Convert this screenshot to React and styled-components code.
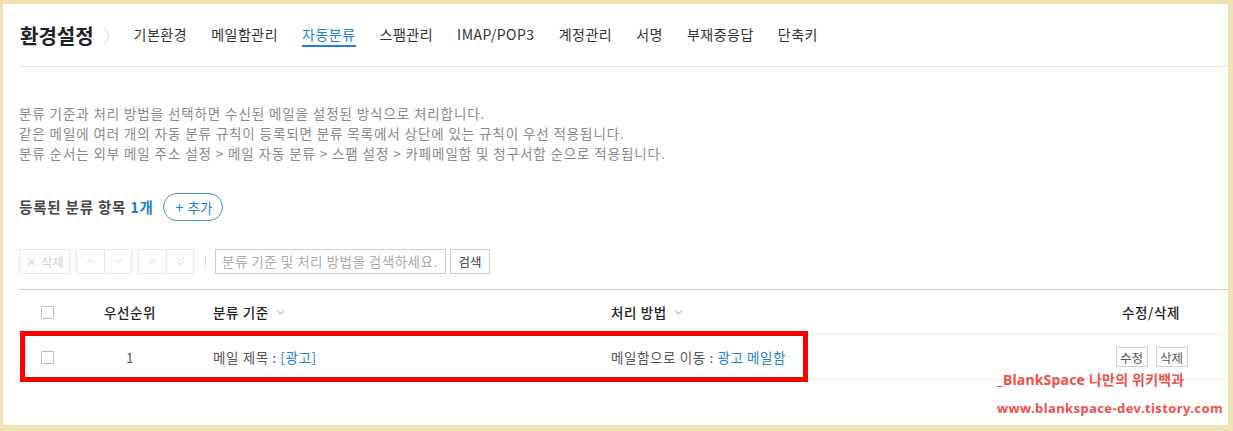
import React from "react";
import styled, { createGlobalStyle } from "styled-components";

const GlobalStyle = createGlobalStyle`
  html, body {
    margin: 0;
    padding: 0;
    background: #efe2b3;
  }
  body {
    font-family: "Noto Sans CJK KR", "Noto Sans", sans-serif;
    color: #333;
  }
  * { box-sizing: border-box; }
`;

const tabs = ["기본환경", "메일함관리", "자동분류", "스팸관리", "IMAP/POP3", "계정관리", "서명", "부재중응답", "단축키"];

const Chevron = ({ size = 7, color = "#999" }) => (
  <svg width={size + 2} height={size} viewBox="0 0 9 7" fill="none">
    <path d="M1 1.5 L4.5 5 L8 1.5" stroke={color} strokeWidth="1" />
  </svg>
);

const App = () => {
  return (
    <Frame>
      <GlobalStyle />
      <Page>
        <Header>
          <Title>환경설정</Title>
          <TitleArrow width="8" height="18" viewBox="0 0 8 18">
            <path d="M1 1 L6.5 9 L1 17" stroke="#d8d8d8" strokeWidth="1" fill="none" />
          </TitleArrow>
          <TabList>
            {tabs.map((t) => (
              <Tab key={t} $active={t === "자동분류"}>{t}</Tab>
            ))}
          </TabList>
        </Header>

        <Description>
          <p>분류 기준과 처리 방법을 선택하면 수신된 메일을 설정된 방식으로 처리합니다.</p>
          <p>같은 메일에 여러 개의 자동 분류 규칙이 등록되면 분류 목록에서 상단에 있는 규칙이 우선 적용됩니다.</p>
          <p>분류 순서는 외부 메일 주소 설정 &gt; 메일 자동 분류 &gt; 스팸 설정 &gt; 카페메일함 및 청구서함 순으로 적용됩니다.</p>
        </Description>

        <CountRow>
          <CountText>
            등록된 분류 항목 <Blue>1개</Blue>
          </CountText>
          <AddButton>
            <span>+</span>추가
          </AddButton>
        </CountRow>

        <Toolbar>
          <ToolButton disabled $w={51}>× 삭제</ToolButton>
          <ButtonGroup>
            <GroupButton disabled>
              <svg width="9" height="6" viewBox="0 0 9 6"><path d="M1 5 L4.5 1.5 L8 5" stroke="#ddd" fill="none" /></svg>
            </GroupButton>
            <GroupButton disabled>
              <svg width="9" height="6" viewBox="0 0 9 6"><path d="M1 1 L4.5 4.5 L8 1" stroke="#ddd" fill="none" /></svg>
            </GroupButton>
          </ButtonGroup>
          <ButtonGroup>
            <GroupButton disabled>
              <svg width="9" height="9" viewBox="0 0 9 9"><path d="M1 4.5 L4.5 1 L8 4.5 M1 8 L4.5 4.5 L8 8" stroke="#ddd" fill="none" /></svg>
            </GroupButton>
            <GroupButton disabled>
              <svg width="9" height="9" viewBox="0 0 9 9"><path d="M1 1 L4.5 4.5 L8 1 M1 4.5 L4.5 8 L8 4.5" stroke="#ddd" fill="none" /></svg>
            </GroupButton>
          </ButtonGroup>
          <Separator />
          <SearchInput placeholder="분류 기준 및 처리 방법을 검색하세요." />
          <SearchButton>검색</SearchButton>
        </Toolbar>

        <Table>
          <HeadRow>
            <CheckCell><CheckBox /></CheckCell>
            <Cell $center>우선순위</Cell>
            <Cell $pad>분류 기준 <Chevron /></Cell>
            <Cell $pad>처리 방법 <Chevron /></Cell>
            <Cell $center $right>수정/삭제</Cell>
          </HeadRow>
          <BodyRow>
            <CheckCell><CheckBox /></CheckCell>
            <Cell $center>1</Cell>
            <Cell $pad>메일 제목 : <Blue $normal>[광고]</Blue></Cell>
            <Cell $pad>메일함으로 이동 : <Blue $normal>광고 메일함</Blue></Cell>
            <Cell $center $right>
              <Actions>
                <SmallButton>수정</SmallButton>
                <SmallButton>삭제</SmallButton>
              </Actions>
            </Cell>
          </BodyRow>
        </Table>
      </Page>

      <Highlight />
      <Watermark>
        <span>_BlankSpace 나만의 위키백과</span>
        <span>www.blankspace-dev.tistory.com</span>
      </Watermark>
    </Frame>
  );
};

export default App;

/* ---------- styles ---------- */

const Frame = styled.div`
  position: relative;
  width: 1233px;
  height: 431px;
  padding: 4px 5px 6px 3px;
  background: #efe2b3;
  overflow: hidden;
`;

const Page = styled.div`
  height: 100%;
  background: #fff;
  padding-left: 16px;
`;

const Header = styled.div`
  display: flex;
  align-items: center;
  height: 63px;
  border-bottom: 1px solid #e6e6e6;
  padding-top: 1px;
`;

const Title = styled.h1`
  margin: 0 0 0 1px;
  font-size: 20px;
  font-weight: 700;
  color: #222;
`;

const TitleArrow = styled.svg`
  margin: 0 23px 0 9px;
`;

const TabList = styled.div`
  display: flex;
  gap: 24px;
`;

const Tab = styled.span`
  font-size: 14px;
  color: ${({ $active }) => ($active ? "#1f7fd3" : "#333")};
  letter-spacing: 0.5px;
  padding-bottom: 1px;
  border-bottom: ${({ $active }) => ($active ? "2px solid #1f7fd3" : "2px solid transparent")};
`;

const Description = styled.div`
  padding-top: 36px;
  font-size: 13.5px;
  color: #8a8a8a;
  letter-spacing: 0.9px;

  p {
    margin: 0;
    line-height: 20px;
  }
`;

const CountRow = styled.div`
  display: flex;
  align-items: center;
  gap: 9px;
  margin-top: 30px;
  height: 27px;
`;

const CountText = styled.span`
  font-size: 14.5px;
  font-weight: 700;
  color: #444;
  letter-spacing: 0.8px;
`;

const Blue = styled.span`
  color: #1f7fd3;
  font-weight: ${({ $normal }) => ($normal ? 400 : 700)};
`;

const AddButton = styled.button`
  height: 28px;
  width: 60px;
  border: 1px solid #3d8fd8;
  border-radius: 14px;
  background: #fff;
  color: #1f7fd3;
  font-family: inherit;
  font-size: 13.5px;
  padding: 0 0 0 2px;
  display: flex;
  align-items: center;
  justify-content: center;
  gap: 4px;

  span {
    font-size: 15px;
    line-height: 1;
  }
`;

const Toolbar = styled.div`
  display: flex;
  align-items: center;
  gap: 6px;
  margin-top: 28px;
  height: 26px;
`;

const ToolButton = styled.button`
  width: ${({ $w }) => $w}px;
  height: 25px;
  border: 1px solid #e8e8e8;
  background: #fff;
  color: #cfcfcf;
  font-family: inherit;
  font-size: 12.5px;
  padding: 0;
`;

const ButtonGroup = styled.div`
  display: flex;
  height: 25px;
  border: 1px solid #e8e8e8;
`;

const GroupButton = styled.button`
  width: 27px;
  height: 23px;
  border: none;
  background: #fff;
  padding: 0;
  display: flex;
  align-items: center;
  justify-content: center;

  & + & {
    border-left: 1px solid #e8e8e8;
  }
`;

const Separator = styled.span`
  width: 1px;
  height: 11px;
  background: #dcdcdc;
  margin: 0 3px 0 5px;
`;

const SearchInput = styled.input`
  width: 231px;
  height: 25px;
  border: 1px solid #cfcfcf;
  padding: 0 6px;
  font-family: inherit;
  font-size: 13.5px;
  letter-spacing: 0.5px;
  color: #333;
  outline: none;

  &::placeholder {
    color: #aaa;
  }
`;

const SearchButton = styled.button`
  width: 40px;
  height: 25px;
  margin-left: -2px;
  border: 1px solid #cfcfcf;
  background: #fff;
  color: #333;
  font-family: inherit;
  font-size: 12.5px;
  padding: 0;
`;

const Table = styled.div`
  margin-top: 15px;
  border-top: 1px solid #cfcfcf;
`;

const rowGrid = `
  display: grid;
  grid-template-columns: 55px 112px 398px 1fr 127px;
  align-items: center;
  height: 45px;
  border-bottom: 1px solid #ececec;
  font-size: 13.5px;
`;

const HeadRow = styled.div`
  ${rowGrid}
  font-weight: 500;
  color: #222;

  svg {
    margin-left: 4px;
  }
`;

const BodyRow = styled.div`
  ${rowGrid}
  color: #555;
`;

const Cell = styled.div`
  display: flex;
  align-items: center;
  justify-content: ${({ $center }) => ($center ? "center" : "flex-start")};
  padding-left: ${({ $pad }) => ($pad ? "27px" : "0")};
  padding-right: ${({ $right }) => ($right ? "27px" : "0")};
  white-space: pre;
  letter-spacing: 0.6px;
`;

const CheckCell = styled.div`
  display: flex;
  justify-content: center;
  padding-left: 1px;
`;

const CheckBox = styled.span`
  display: block;
  width: 13px;
  height: 13px;
  border: 1px solid #bdbdbd;
  border-radius: 1px;
  background: #fff;
`;

const Actions = styled.div`
  display: flex;
  gap: 8px;
  margin-left: 1px;
`;

const SmallButton = styled.button`
  width: 32px;
  height: 20px;
  border: 1px solid #cfcfcf;
  background: #fff;
  color: #555;
  font-family: inherit;
  font-size: 12.5px;
  padding: 0;
  letter-spacing: 0;
`;

const Highlight = styled.div`
  position: absolute;
  left: 20px;
  top: 331px;
  width: 788px;
  height: 51px;
  border: 5px solid #ff0000;
  pointer-events: none;
`;

const Watermark = styled.div`
  position: absolute;
  left: 997px;
  top: 369px;
  display: flex;
  flex-direction: column;
  gap: 6px;
  color: #f0504a;
  font-family: "Noto Sans", "Noto Sans CJK KR", sans-serif;
  font-weight: 700;

  span:first-child {
    font-size: 14px;
    line-height: 22px;
    letter-spacing: 0.2px;
  }
  span:last-child {
    font-size: 13px;
    line-height: 22px;
    letter-spacing: 0.4px;
  }
`;
